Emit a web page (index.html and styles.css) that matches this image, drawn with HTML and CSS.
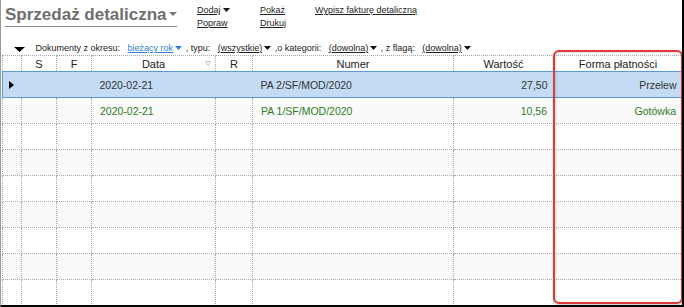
FILE: index.html
```html
<!DOCTYPE html>
<html lang="pl">
<head>
  <meta charset="UTF-8" />
  <meta name="viewport" content="width=device-width, initial-scale=1.0"/>
  <title>Sprzedaż detaliczna</title>
  <link rel="stylesheet" href="styles.css">
</head>
<body>
  <div class="window">
    <div class="toolbar">
      <div class="title">
        <span class="title-text">Sprzedaż detaliczna<svg class="title-caret" width="8" height="4" viewBox="0 0 8 4"><path d="M0 0h8L4 4z"/></svg></span>
      </div>
      <div class="action-col col-dodaj">
        <a href="#">Dodaj</a><svg class="caret" width="7" height="4" viewBox="0 0 7 4"><path d="M0 0h7L3.5 4z"/></svg>
        <br>
        <a href="#">Popraw</a>
      </div>
      <div class="action-col col-pokaz">
        <a href="#">Pokaż</a>
        <br>
        <a href="#">Drukuj</a>
      </div>
      <div class="action-col">
        <a href="#">Wypisz fakturę detaliczną</a>
      </div>
    </div>

    <div class="filters">
      <svg class="filter-toggle" width="11" height="5" viewBox="0 0 11 5"><path d="M0 0h11L5.5 5z"/></svg>
      <span class="label">Dokumenty z okresu:</span>
      <a href="#" class="pick pick-blue">bieżący rok</a><svg class="caret blue" width="7" height="4" viewBox="0 0 7 4"><path d="M0 0h7L3.5 4z"/></svg>
      <span class="label">, typu:</span>
      <a href="#" class="pick">(wszystkie)</a><svg class="caret" width="7" height="4" viewBox="0 0 7 4"><path d="M0 0h7L3.5 4z"/></svg>
      <span class="label">,o kategorii:</span>
      <a href="#" class="pick">(dowolna)</a><svg class="caret" width="7" height="4" viewBox="0 0 7 4"><path d="M0 0h7L3.5 4z"/></svg>
      <span class="label">, z flagą:</span>
      <a href="#" class="pick">(dowolna)</a><svg class="caret" width="7" height="4" viewBox="0 0 7 4"><path d="M0 0h7L3.5 4z"/></svg>
    </div>

    <table class="grid">
      <colgroup>
        <col style="width:19px"><col style="width:35px"><col style="width:35px"><col style="width:124px">
        <col style="width:37px"><col style="width:201px"><col style="width:100px"><col style="width:129px">
      </colgroup>
      <thead>
        <tr>
          <th></th>
          <th>S</th>
          <th>F</th>
          <th class="sortable">Data<svg class="sort" width="6" height="5" viewBox="0 0 6 5"><path d="M0.5 0.5h5L3 4.5z"/></svg></th>
          <th>R</th>
          <th>Numer</th>
          <th>Wartość</th>
          <th>Forma płatności</th>
        </tr>
      </thead>
      <tbody>
        <tr class="selected">
          <td class="indicator"><svg width="5" height="8" viewBox="0 0 5 8"><path d="M0 0l5 4-5 4z"/></svg></td>
          <td></td>
          <td></td>
          <td class="date">2020-02-21</td>
          <td></td>
          <td class="num">PA 2/SF/MOD/2020</td>
          <td class="right">27,50</td>
          <td class="right">Przelew</td>
        </tr>
        <tr class="paid">
          <td></td>
          <td></td>
          <td></td>
          <td class="date">2020-02-21</td>
          <td></td>
          <td class="num">PA 1/SF/MOD/2020</td>
          <td class="right">10,56</td>
          <td class="right">Gotówka</td>
        </tr>
        <tr><td></td><td></td><td></td><td></td><td></td><td></td><td></td><td></td></tr>
        <tr><td></td><td></td><td></td><td></td><td></td><td></td><td></td><td></td></tr>
        <tr><td></td><td></td><td></td><td></td><td></td><td></td><td></td><td></td></tr>
        <tr><td></td><td></td><td></td><td></td><td></td><td></td><td></td><td></td></tr>
        <tr><td></td><td></td><td></td><td></td><td></td><td></td><td></td><td></td></tr>
        <tr><td></td><td></td><td></td><td></td><td></td><td></td><td></td><td></td></tr>
        <tr><td></td><td></td><td></td><td></td><td></td><td></td><td></td><td></td></tr>
      </tbody>
    </table>

    <div class="highlight"></div>
  </div>
</body>
</html>
```

FILE: styles.css
```css
* {
  margin: 0;
  padding: 0;
  box-sizing: border-box;
  font-family: 'Liberation Sans', Arial, sans-serif;
}

body {
  background: #fff;
  width: 684px;
  height: 307px;
  overflow: hidden;
}

.window {
  position: relative;
  width: 684px;
  height: 307px;
  border-left: 1px solid #9a9a9a;
  border-right: 2px solid #000;
  border-bottom: 2px solid #000;
  overflow: hidden;
}

/* top bar */

.toolbar {
  display: flex;
  height: 41px;
}

.title {
  width: 196px;
  padding: 5px 0 0 4px;
}

.title-text {
  display: inline-block;
  font-size: 17px;
  font-weight: bold;
  line-height: 20px;
  color: #6e6e6e;
  border-bottom: 1px solid #8a8a8a;
  padding-bottom: 1px;
}

.title-caret {
  fill: #777;
  margin-left: 2px;
  vertical-align: 4px;
}

.action-col {
  padding-top: 4px;
  font-size: 9px;
  line-height: 13px;
}

.col-dodaj {
  width: 63px;
}

.col-pokaz {
  width: 55px;
}

.action-col a {
  color: #222;
  text-decoration: underline;
}

.caret {
  fill: #111;
  margin-left: 2px;
  vertical-align: 1px;
}

.caret.blue {
  fill: #2f7fd8;
}

/* filter line */

.filters {
  height: 14px;
  padding-left: 13px;
  font-size: 9px;
  line-height: 14px;
  color: #222;
  white-space: nowrap;
}

.filter-toggle {
  fill: #000;
  margin-right: 8px;
  vertical-align: -1px;
}

.label {
  margin-right: 5px;
}

.pick {
  color: #222;
  text-decoration: underline;
}

.pick-blue {
  color: #2f7fd8;
}

.caret + .label {
  margin-left: 1px;
}

/* grid */

.grid {
  margin-left: 1px;
  width: 680px;
  table-layout: fixed;
  border-collapse: collapse;
  font-size: 10.5px;
  color: #333;
}

.grid th,
.grid td {
  border: 1px dotted #a8a8a8;
  white-space: nowrap;
  overflow: hidden;
}

.grid th {
  height: 16px;
  font-weight: normal;
  font-size: 11px;
  color: #222;
  text-align: center;
  line-height: 14px;
}

.grid th.sortable {
  position: relative;
}

.sort {
  position: absolute;
  right: 4px;
  top: 5px;
  fill: none;
  stroke: #c4c4c4;
  stroke-width: 1;
}

.grid td {
  height: 26px;
  padding: 0 6px 0 8px;
}

.grid tbody tr:nth-child(even) td {
  background: #fafafa;
}

.grid td.right {
  text-align: right;
}

.grid tr.selected td {
  background: #c3dcf3;
  border-top: 1px solid #5b9ad6;
  border-bottom: 1px solid #5b9ad6;
  border-left: none;
  border-right: none;
}

.grid tr.selected td:first-child {
  border-left: 1px solid #5b9ad6;
}

.grid tr.selected td.indicator {
  padding: 0 0 0 6px;
}

.indicator svg {
  display: block;
  fill: #000;
}

.grid tr.paid td {
  color: #2e7a24;
}

/* annotation */

.highlight {
  position: absolute;
  left: 552px;
  top: 50px;
  width: 130px;
  height: 254px;
  border: 2px solid #e2383a;
  border-radius: 6px;
  box-shadow: 1px 1px 3px rgba(0, 0, 0, 0.25), inset 1px 1px 3px rgba(0, 0, 0, 0.15);
}
```
